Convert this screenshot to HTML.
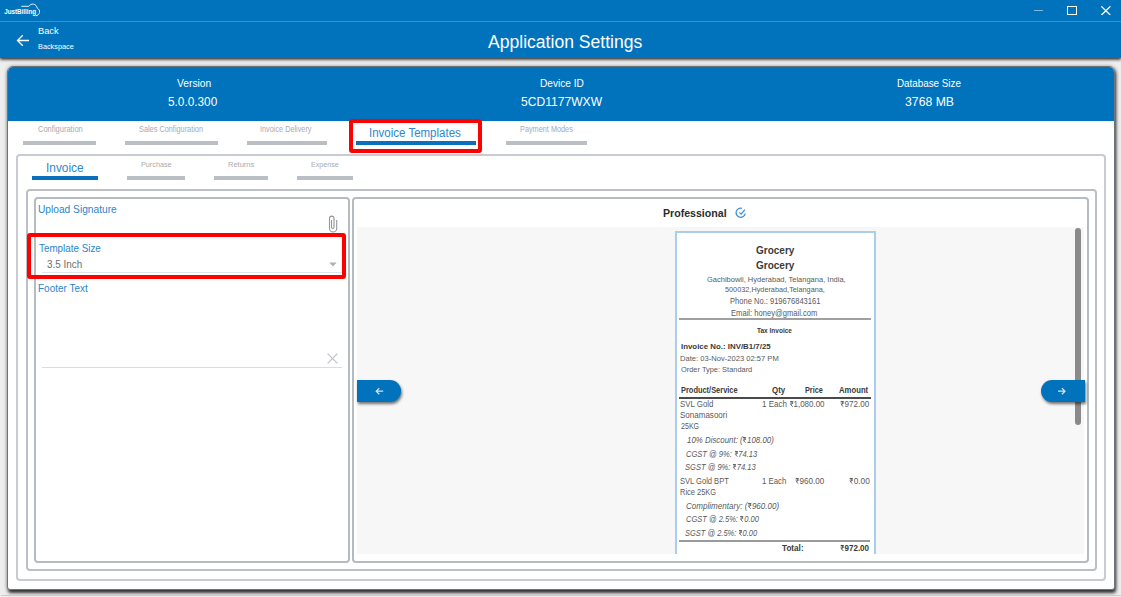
<!DOCTYPE html>
<html><head><meta charset="utf-8"><title>Application Settings</title>
<style>
html,body{margin:0;padding:0;}
body{width:1121px;height:597px;position:relative;overflow:hidden;background:#eeeeee;font-family:"Liberation Sans",sans-serif;}
div{box-sizing:border-box;}
.a{position:absolute;}
.tx{position:absolute;white-space:nowrap;transform-origin:0 0;z-index:5;}
svg.ru{display:inline-block;vertical-align:baseline;overflow:visible;}
.bar{position:absolute;height:3.5px;background:#b9bfc5;top:141.3px;}
.bx{position:absolute;border:1.5px solid #a9aeb3;border-radius:4px;}
</style></head><body>
<!-- title bar + header -->
<div class="a" style="left:0;top:0;width:1121px;height:58px;background:#0173bc;box-shadow:0 1.5px 3px rgba(0,0,0,0.85)"></div>
<div class="a" style="left:0;top:21px;width:1121px;height:1px;background:#3f8fcc"></div>
<!-- outer card -->
<div class="a" style="left:7px;top:66px;width:1108px;height:523.5px;background:#fff;border-radius:6px 6px 3px 3px;border:1px solid #6f7479;box-shadow:0 0 4px rgba(0,0,0,0.22),1px 2.5px 3.5px rgba(0,0,0,0.78);overflow:hidden">
  <div class="a" style="left:0;top:0;width:1106px;height:54px;background:#0173bc"></div>
</div>
<!-- tab bars -->
<div class="bar" style="left:22.7px;width:73.5px"></div>
<div class="bar" style="left:125.4px;width:92.3px"></div>
<div class="bar" style="left:246.8px;width:79.8px"></div>
<div class="bar" style="left:355.7px;width:120.7px;background:#0a6fbd"></div>
<div class="bar" style="left:505.7px;width:81.4px"></div>
<!-- card 1 -->
<div class="bx" style="left:16px;top:154px;width:1090px;height:426.5px;border:2px solid #c8ccd0"></div>
<!-- sub tab bars -->
<div class="bar" style="top:176px;left:31.6px;width:66.6px;background:#0a6fbd"></div>
<div class="bar" style="top:176px;left:127.1px;width:58.4px"></div>
<div class="bar" style="top:176px;left:214.3px;width:53.9px"></div>
<div class="bar" style="top:176px;left:297.3px;width:55.9px"></div>
<!-- card 2 -->
<div class="bx" style="left:26px;top:189px;width:1071px;height:382px;border:2px solid #bcc0c4"></div>
<!-- signature panel -->
<div class="bx" style="left:34px;top:197px;width:316px;height:366px;border:2px solid #b6bbbf"></div>
<!-- preview panel -->
<div class="bx" style="left:352px;top:197px;width:737px;height:366px;border:2px solid #b6bbbf"></div>
<!-- preview gray area -->
<div class="a" style="left:357px;top:227.3px;width:727px;height:327px;background:#f7f7f7"></div>
<!-- invoice paper -->
<div class="a" style="left:675px;top:231.3px;width:201px;height:323px;background:#fff;border:2px solid #a9cdea;border-bottom:none"></div>
<div class="a" style="left:679px;top:318.3px;width:192px;height:2px;background:#a0a0a0"></div>
<div class="a" style="left:679.4px;top:397px;width:192px;height:1.8px;background:#4a4a4a"></div>
<div class="a" style="left:679px;top:540.3px;width:191px;height:1.6px;background:#9a9a9a"></div>
<!-- scrollbar -->
<div class="a" style="left:1074.8px;top:227.5px;width:5.8px;height:197px;background:#8a8a8a;border-radius:3px"></div>
<!-- nav buttons -->
<div class="a" style="left:357px;top:380px;width:44px;height:22px;background:#0173bc;border-radius:0 11px 11px 0;box-shadow:1px 2px 3px rgba(0,0,0,0.55)"></div>
<div class="a" style="left:1040.5px;top:380px;width:44px;height:22px;background:#0173bc;border-radius:11px 0 0 11px;box-shadow:1px 2px 3px rgba(0,0,0,0.55)"></div>
<svg class="a" style="left:373px;top:386px" width="12" height="10" viewBox="0 0 12 10"><path d="M10.2 5.2H3.2M6.3 2.1L3.2 5.2L6.3 8.3" fill="none" stroke="rgba(255,255,255,0.82)" stroke-width="1.25"/></svg>
<svg class="a" style="left:1056px;top:386px" width="12" height="10" viewBox="0 0 12 10"><path d="M2 5.2H9M5.9 2.1L9 5.2L5.9 8.3" fill="none" stroke="rgba(255,255,255,0.82)" stroke-width="1.25"/></svg>
<!-- underlines in signature panel -->
<div class="a" style="left:42px;top:272px;width:299.5px;height:1px;background:#dde3e8"></div>
<div class="a" style="left:42px;top:367px;width:299.5px;height:1px;background:#d6dde3"></div>
<!-- dropdown triangle -->
<svg class="a" style="left:328.5px;top:261.5px" width="8" height="5" viewBox="0 0 8 5"><path d="M0.3 0.5H7.7L4 4.5Z" fill="#a9b0b7"/></svg>
<!-- clear X -->
<svg class="a" style="left:327px;top:352.5px" width="11" height="11" viewBox="0 0 11 11"><path d="M0.6 0.6L10.4 10.4M10.4 0.6L0.6 10.4" stroke="#bfc4c9" stroke-width="1.3"/></svg>
<!-- paperclip -->
<svg class="a" style="left:328px;top:215px" width="10" height="18" viewBox="0 0 10 18"><path d="M3.5 5V12.2A1.25 1.25 0 0 0 6 12.2V3.4A2.25 2.25 0 0 0 1.5 3.4V13.4A3.6 3.6 0 0 0 8.7 13.4V5" fill="none" stroke="#92979c" stroke-width="1.1"/></svg>
<!-- check icon -->
<svg class="a" style="left:733px;top:206px" width="16" height="14" viewBox="0 0 16 14"><path d="M12.23 7.5A4.6 4.6 0 1 1 8.89 2.26" fill="none" stroke="#3d90d6" stroke-width="1.3"/><path d="M6.3 6.4L8.1 8.1L11.9 3.6" fill="none" stroke="#3d90d6" stroke-width="1.3"/></svg>
<!-- red highlight boxes -->
<div class="a" style="left:348.6px;top:119px;width:133.2px;height:34.4px;border:4.5px solid #ff0000;border-radius:3px"></div>
<div class="a" style="left:26.7px;top:233.2px;width:319px;height:45.6px;border:4.5px solid #ff0000;border-radius:3px"></div>
<!-- window controls -->
<div class="a" style="left:1033.5px;top:10.3px;width:9px;height:1px;background:rgba(255,255,255,0.5)"></div>
<div class="a" style="left:1067.4px;top:6.2px;width:10px;height:9px;border:1px solid #fff"></div>
<svg class="a" style="left:1100.8px;top:5.8px" width="10" height="9.5" viewBox="0 0 10 9.5"><path d="M0.4 0.4L9.4 9.1M9.4 0.4L0.4 9.1" stroke="#fff" stroke-width="1.3"/></svg>
<!-- back arrow -->
<svg class="a" style="left:16px;top:33.5px" width="14" height="13" viewBox="0 0 14 13"><path d="M13 6.5H1.5M6.8 1.2L1.5 6.5L6.8 11.8" fill="none" stroke="#fff" stroke-width="1.3"/></svg>
<!-- logo -->
<svg class="a" style="left:0;top:0" width="45" height="20" viewBox="0 0 45 20"><path d="M21.3 6.3H28.8M28.8 6.3C30 4.6 31.6 3.9 33.3 4.1C35.6 4.4 36.9 6.2 37.2 8.2C38.9 9 39.8 10.6 39.5 12.4C39.2 14.4 37.6 15.6 35.6 15.8" fill="none" stroke="#e3f0fb" stroke-width="1"/><text x="4.2" y="13.9" font-family="Liberation Sans" font-weight="700" font-size="6.9" fill="#fff" textLength="32" lengthAdjust="spacingAndGlyphs">JustBilling</text></svg>
<!-- bottom line -->
<div class="a" style="left:1px;top:595px;width:1120px;height:1px;background:#cbcbcb"></div>

<div class="tx" style="left:38.11px;top:25.52px;font:400 9.86px/9.86px 'Liberation Sans', sans-serif;transform:scaleX(0.9397);color:#ffffff">Back</div>
<div class="tx" style="left:38.25px;top:43.10px;font:400 8.00px/8.00px 'Liberation Sans', sans-serif;transform:scaleX(0.9138);color:#ffffff">Backspace</div>
<div class="tx" style="left:487.70px;top:33.52px;font:400 17.86px/17.86px 'Liberation Sans', sans-serif;transform:scaleX(0.9837);color:#ffffff">Application Settings</div>
<div class="tx" style="left:176.80px;top:77.95px;font:400 11.00px/11.00px 'Liberation Sans', sans-serif;transform:scaleX(0.9328);color:#ffffff">Version</div>
<div class="tx" style="left:168.41px;top:96.46px;font:400 12.29px/12.29px 'Liberation Sans', sans-serif;transform:scaleX(0.9609);color:#ffffff">5.0.0.300</div>
<div class="tx" style="left:539.54px;top:77.95px;font:400 11.00px/11.00px 'Liberation Sans', sans-serif;transform:scaleX(0.9188);color:#ffffff">Device ID</div>
<div class="tx" style="left:520.60px;top:96.46px;font:400 12.29px/12.29px 'Liberation Sans', sans-serif;transform:scaleX(0.9842);color:#ffffff">5CD1177WXW</div>
<div class="tx" style="left:897.36px;top:77.95px;font:400 11.00px/11.00px 'Liberation Sans', sans-serif;transform:scaleX(0.8935);color:#ffffff">Database Size</div>
<div class="tx" style="left:905.09px;top:96.46px;font:400 12.29px/12.29px 'Liberation Sans', sans-serif;transform:scaleX(0.9977);color:#ffffff">3768 MB</div>
<div class="tx" style="left:37.52px;top:126.08px;font:400 8.14px/8.14px 'Liberation Sans', sans-serif;transform:scaleX(0.9259);color:#a7abaf">Configuration</div>
<div class="tx" style="left:139.23px;top:126.08px;font:400 8.14px/8.14px 'Liberation Sans', sans-serif;transform:scaleX(0.9028);color:#a7abaf">Sales Configuration</div>
<div class="tx" style="left:260.47px;top:126.08px;font:400 8.14px/8.14px 'Liberation Sans', sans-serif;transform:scaleX(0.8977);color:#a7abaf">Invoice Delivery</div>
<div class="tx" style="left:369.35px;top:127.49px;font:400 12.71px/12.71px 'Liberation Sans', sans-serif;transform:scaleX(0.9048);color:#2f87cb">Invoice Templates</div>
<div class="tx" style="left:520.15px;top:126.08px;font:400 8.14px/8.14px 'Liberation Sans', sans-serif;transform:scaleX(0.8999);color:#a7abaf">Payment Modes</div>
<div class="tx" style="left:46.22px;top:162.07px;font:400 12.86px/12.86px 'Liberation Sans', sans-serif;transform:scaleX(0.9208);color:#2f87cb">Invoice</div>
<div class="tx" style="left:141.46px;top:161.16px;font:400 7.57px/7.57px 'Liberation Sans', sans-serif;transform:scaleX(0.9576);color:#a7abaf">Purchase</div>
<div class="tx" style="left:227.74px;top:161.16px;font:400 7.57px/7.57px 'Liberation Sans', sans-serif;transform:scaleX(0.9918);color:#a7abaf">Returns</div>
<div class="tx" style="left:310.77px;top:161.16px;font:400 7.57px/7.57px 'Liberation Sans', sans-serif;transform:scaleX(0.9415);color:#a7abaf">Expense</div>
<div class="tx" style="left:38.24px;top:203.77px;font:400 10.86px/10.86px 'Liberation Sans', sans-serif;transform:scaleX(0.9380);color:#2a86cc">Upload Signature</div>
<div class="tx" style="left:38.75px;top:242.77px;font:400 10.86px/10.86px 'Liberation Sans', sans-serif;transform:scaleX(0.9056);color:#2a86cc">Template Size</div>
<div class="tx" style="left:47.31px;top:258.85px;font:400 11.00px/11.00px 'Liberation Sans', sans-serif;transform:scaleX(0.8988);color:#6b6f73">3.5 Inch</div>
<div class="tx" style="left:38.25px;top:283.37px;font:400 10.86px/10.86px 'Liberation Sans', sans-serif;transform:scaleX(0.9193);color:#2a86cc">Footer Text</div>
<div class="tx" style="left:662.90px;top:208.19px;font:700 10.71px/10.71px 'Liberation Sans', sans-serif;transform:scaleX(0.9897);color:#2b2b2b">Professional</div>
<div class="tx" style="left:755.60px;top:245.86px;font:700 10.29px/10.29px 'Liberation Sans', sans-serif;transform:scaleX(0.9738);color:#3a3a3a">Grocery</div>
<div class="tx" style="left:755.60px;top:260.56px;font:700 10.29px/10.29px 'Liberation Sans', sans-serif;transform:scaleX(0.9738);color:#3a3a3a">Grocery</div>
<div class="tx" style="left:706.83px;top:275.92px;font:400 7.86px/7.86px 'Liberation Sans', sans-serif;transform:scaleX(0.9538);color:#5a5a5a">Gachibowli, Hyderabad, Telangana, India,</div>
<div class="tx" style="left:724.64px;top:286.42px;font:400 7.86px/7.86px 'Liberation Sans', sans-serif;transform:scaleX(0.9290);color:#5a5a5a">500032,Hyderabad,Telangana,</div>
<div class="tx" style="left:729.53px;top:297.98px;font:400 8.14px/8.14px 'Liberation Sans', sans-serif;transform:scaleX(0.9308);color:#5a5a5a">Phone No.: 919676843161</div>
<div class="tx" style="left:731.23px;top:309.78px;font:400 8.14px/8.14px 'Liberation Sans', sans-serif;transform:scaleX(0.9355);color:#5a5a5a">Email: honey@gmail.com</div>
<div class="tx" style="left:757.30px;top:327.83px;font:700 7.14px/7.14px 'Liberation Sans', sans-serif;transform:scaleX(0.9135);color:#3a3a3a">Tax Invoice</div>
<div class="tx" style="left:681.01px;top:343.46px;font:700 7.57px/7.57px 'Liberation Sans', sans-serif;transform:scaleX(1.0404);color:#3a3a3a">Invoice No.: INV/B1/7/25</div>
<div class="tx" style="left:680.03px;top:355.14px;font:400 7.71px/7.71px 'Liberation Sans', sans-serif;transform:scaleX(0.9857);color:#5a5a5a">Date: 03-Nov-2023 02:57 PM</div>
<div class="tx" style="left:681.23px;top:365.94px;font:400 7.71px/7.71px 'Liberation Sans', sans-serif;transform:scaleX(0.9635);color:#5a5a5a">Order Type: Standard</div>
<div class="tx" style="left:681.04px;top:385.54px;font:700 8.43px/8.43px 'Liberation Sans', sans-serif;transform:scaleX(0.8828);color:#3a3a3a">Product/Service</div>
<div class="tx" style="left:771.61px;top:385.54px;font:700 8.43px/8.43px 'Liberation Sans', sans-serif;transform:scaleX(0.9362);color:#3a3a3a">Qty</div>
<div class="tx" style="left:805.06px;top:385.54px;font:700 8.43px/8.43px 'Liberation Sans', sans-serif;transform:scaleX(0.8609);color:#3a3a3a">Price</div>
<div class="tx" style="left:839.31px;top:385.54px;font:700 8.43px/8.43px 'Liberation Sans', sans-serif;transform:scaleX(0.9175);color:#3a3a3a">Amount</div>
<div class="tx" style="left:680.20px;top:401.28px;font:400 8.14px/8.14px 'Liberation Sans', sans-serif;transform:scaleX(0.9707);color:#5a5a5a">SVL Gold</div>
<div class="tx" style="left:762.20px;top:401.28px;font:400 8.14px/8.14px 'Liberation Sans', sans-serif;transform:scaleX(0.9811);color:#5a5a5a">1 Each <svg class="ru" viewBox="0 0 6 10" width="0.56em" height="0.72em"><path d="M0.2 0.8H5.8M0.2 3.5H5.8M1 0.8H2.3C4.7 0.8 4.7 6 2.3 6H1L4.9 9.8" fill="none" stroke="currentColor" stroke-width="1.5"/></svg>1,080.00</div>
<div class="tx" style="left:840.29px;top:401.28px;font:400 8.14px/8.14px 'Liberation Sans', sans-serif;transform:scaleX(0.9930);color:#5a5a5a"><svg class="ru" viewBox="0 0 6 10" width="0.56em" height="0.72em"><path d="M0.2 0.8H5.8M0.2 3.5H5.8M1 0.8H2.3C4.7 0.8 4.7 6 2.3 6H1L4.9 9.8" fill="none" stroke="currentColor" stroke-width="1.5"/></svg>972.00</div>
<div class="tx" style="left:680.20px;top:412.48px;font:400 8.14px/8.14px 'Liberation Sans', sans-serif;transform:scaleX(0.9870);color:#5a5a5a">Sonamasoori</div>
<div class="tx" style="left:681.24px;top:422.78px;font:400 8.14px/8.14px 'Liberation Sans', sans-serif;transform:scaleX(0.8725);color:#5a5a5a">25KG</div>
<div class="tx" style="left:686.50px;top:437.28px;font:italic 400 8.14px/8.14px 'Liberation Sans', sans-serif;transform:scaleX(0.9701);color:#5a5a5a">10% Discount: (<svg class="ru" viewBox="0 0 6 10" width="0.56em" height="0.72em"><path d="M0.2 0.8H5.8M0.2 3.5H5.8M1 0.8H2.3C4.7 0.8 4.7 6 2.3 6H1L4.9 9.8" fill="none" stroke="currentColor" stroke-width="1.5"/></svg>108.00)</div>
<div class="tx" style="left:686.12px;top:450.88px;font:italic 400 8.14px/8.14px 'Liberation Sans', sans-serif;transform:scaleX(0.9300);color:#5a5a5a">CGST @ 9%: <svg class="ru" viewBox="0 0 6 10" width="0.56em" height="0.72em"><path d="M0.2 0.8H5.8M0.2 3.5H5.8M1 0.8H2.3C4.7 0.8 4.7 6 2.3 6H1L4.9 9.8" fill="none" stroke="currentColor" stroke-width="1.5"/></svg>74.13</div>
<div class="tx" style="left:685.31px;top:464.08px;font:italic 400 8.14px/8.14px 'Liberation Sans', sans-serif;transform:scaleX(0.9286);color:#5a5a5a">SGST @ 9%: <svg class="ru" viewBox="0 0 6 10" width="0.56em" height="0.72em"><path d="M0.2 0.8H5.8M0.2 3.5H5.8M1 0.8H2.3C4.7 0.8 4.7 6 2.3 6H1L4.9 9.8" fill="none" stroke="currentColor" stroke-width="1.5"/></svg>74.13</div>
<div class="tx" style="left:680.22px;top:478.08px;font:400 8.14px/8.14px 'Liberation Sans', sans-serif;transform:scaleX(0.9289);color:#5a5a5a">SVL Gold BPT</div>
<div class="tx" style="left:762.21px;top:478.08px;font:400 8.14px/8.14px 'Liberation Sans', sans-serif;transform:scaleX(0.9586);color:#5a5a5a">1 Each</div>
<div class="tx" style="left:794.79px;top:478.08px;font:400 8.14px/8.14px 'Liberation Sans', sans-serif;transform:scaleX(0.9930);color:#5a5a5a"><svg class="ru" viewBox="0 0 6 10" width="0.56em" height="0.72em"><path d="M0.2 0.8H5.8M0.2 3.5H5.8M1 0.8H2.3C4.7 0.8 4.7 6 2.3 6H1L4.9 9.8" fill="none" stroke="currentColor" stroke-width="1.5"/></svg>960.00</div>
<div class="tx" style="left:848.68px;top:478.08px;font:400 8.14px/8.14px 'Liberation Sans', sans-serif;transform:scaleX(1.0190);color:#5a5a5a"><svg class="ru" viewBox="0 0 6 10" width="0.56em" height="0.72em"><path d="M0.2 0.8H5.8M0.2 3.5H5.8M1 0.8H2.3C4.7 0.8 4.7 6 2.3 6H1L4.9 9.8" fill="none" stroke="currentColor" stroke-width="1.5"/></svg>0.00</div>
<div class="tx" style="left:680.04px;top:488.68px;font:400 8.14px/8.14px 'Liberation Sans', sans-serif;transform:scaleX(0.9174);color:#5a5a5a">Rice 25KG</div>
<div class="tx" style="left:686.10px;top:503.08px;font:italic 400 8.14px/8.14px 'Liberation Sans', sans-serif;transform:scaleX(0.9921);color:#5a5a5a">Complimentary: (<svg class="ru" viewBox="0 0 6 10" width="0.56em" height="0.72em"><path d="M0.2 0.8H5.8M0.2 3.5H5.8M1 0.8H2.3C4.7 0.8 4.7 6 2.3 6H1L4.9 9.8" fill="none" stroke="currentColor" stroke-width="1.5"/></svg>960.00)</div>
<div class="tx" style="left:686.12px;top:515.68px;font:italic 400 8.14px/8.14px 'Liberation Sans', sans-serif;transform:scaleX(0.9251);color:#5a5a5a">CGST @ 2.5%: <svg class="ru" viewBox="0 0 6 10" width="0.56em" height="0.72em"><path d="M0.2 0.8H5.8M0.2 3.5H5.8M1 0.8H2.3C4.7 0.8 4.7 6 2.3 6H1L4.9 9.8" fill="none" stroke="currentColor" stroke-width="1.5"/></svg>0.00</div>
<div class="tx" style="left:685.31px;top:529.68px;font:italic 400 8.14px/8.14px 'Liberation Sans', sans-serif;transform:scaleX(0.9212);color:#5a5a5a">SGST @ 2.5%: <svg class="ru" viewBox="0 0 6 10" width="0.56em" height="0.72em"><path d="M0.2 0.8H5.8M0.2 3.5H5.8M1 0.8H2.3C4.7 0.8 4.7 6 2.3 6H1L4.9 9.8" fill="none" stroke="currentColor" stroke-width="1.5"/></svg>0.00</div>
<div class="tx" style="left:782.00px;top:544.04px;font:700 8.43px/8.43px 'Liberation Sans', sans-serif;transform:scaleX(0.9684);color:#3a3a3a">Total:</div>
<div class="tx" style="left:839.60px;top:544.04px;font:700 8.43px/8.43px 'Liberation Sans', sans-serif;transform:scaleX(0.9530);color:#3a3a3a"><svg class="ru" viewBox="0 0 6 10" width="0.56em" height="0.72em"><path d="M0.2 0.8H5.8M0.2 3.5H5.8M1 0.8H2.3C4.7 0.8 4.7 6 2.3 6H1L4.9 9.8" fill="none" stroke="currentColor" stroke-width="1.5"/></svg>972.00</div>
</body></html>
